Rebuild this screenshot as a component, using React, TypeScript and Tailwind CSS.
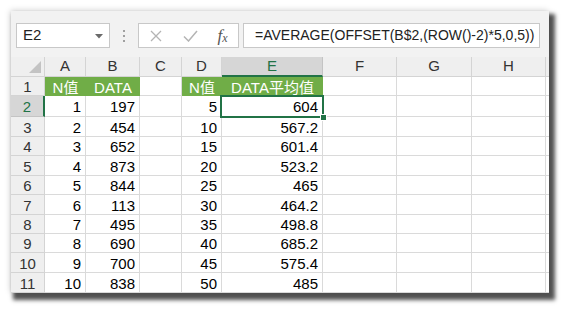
import React from "react";

const COLS = ["A", "B", "C", "D", "E", "F", "G", "H"];
const COL_W = ["w-[41px]", "w-[54px]", "w-[42px]", "w-[40px]", "w-[101px]", "w-[74px]", "w-[75px]", "w-[74px]"];
const ROW_H = ["h-[19px]", "h-[21px]", "h-[20px]", "h-[19px]", "h-[20px]", "h-[19px]", "h-[20px]", "h-[19px]", "h-[19px]", "h-[20px]", "h-[20px]"];

const B = [197, 454, 652, 873, 844, 113, 495, 690, 700, 838];
const E = ["604", "567.2", "601.4", "523.2", "465", "464.2", "498.8", "685.2", "575.4", "485"];

const font = { fontFamily: '"Liberation Sans", "Noto Sans CJK SC", Arial, sans-serif' };

function cellContent(r: number, c: number): { text: string; header?: boolean } {
  if (r === 0) {
    if (c === 0) return { text: "N值", header: true };
    if (c === 1) return { text: "DATA", header: true };
    if (c === 3) return { text: "N值", header: true };
    if (c === 4) return { text: "DATA平均值", header: true };
    return { text: "" };
  }
  const i = r - 1;
  if (c === 0) return { text: String(i + 1) };
  if (c === 1) return { text: String(B[i]) };
  if (c === 3) return { text: String((i + 1) * 5) };
  if (c === 4) return { text: E[i] };
  return { text: "" };
}

export default function App() {
  return (
    <div className="w-[567px] h-[312px] bg-white pl-[11px] pt-[11px] overflow-hidden" style={font}>
      <div className="w-[538px] h-[282px] bg-white overflow-hidden shadow-[4px_5px_4px_2px_rgba(0,0,0,0.68),-1px_-1px_6px_rgba(0,0,0,0.15)] flex flex-col">
        {/* formula bar */}
        <div className="h-[46px] bg-[#f2f2f2] flex items-start pt-[12px] pl-[5px] shrink-0">
          <div className="w-[94px] h-[25px] bg-white border border-[#c8c8c8] flex items-center pl-[6px] text-[15px] text-[#222] relative">
            E2
            <svg className="absolute right-[6px] top-[10px]" width="8" height="5" viewBox="0 0 8 5">
              <path d="M0 0 L8 0 L4 4.5 Z" fill="#6a6a6a" />
            </svg>
          </div>
          <div className="w-[28px] h-[25px] flex flex-col items-center justify-center gap-[3px]">
            <div className="w-[2px] h-[2px] bg-[#a0a0a0]" />
            <div className="w-[2px] h-[2px] bg-[#a0a0a0]" />
            <div className="w-[2px] h-[2px] bg-[#a0a0a0]" />
          </div>
          <div className="w-[101px] h-[25px] bg-white border border-[#c8c8c8] flex items-center">
            <div className="w-[34px] flex justify-center">
              <svg width="12" height="12" viewBox="0 0 12 12">
                <path d="M1 1 L11 11 M11 1 L1 11" stroke="#b4b4b4" strokeWidth="1.3" />
              </svg>
            </div>
            <div className="w-[34px] flex justify-center">
              <svg width="15" height="12" viewBox="0 0 15 12">
                <path d="M1 6.5 L5.5 11 L14 1" stroke="#b4b4b4" strokeWidth="1.5" fill="none" />
              </svg>
            </div>
            <div className="w-[31px] flex justify-center items-center text-[#555] italic" style={{ fontFamily: '"Liberation Serif", serif' }}>
              <span className="text-[17px] leading-none">f</span>
              <span className="text-[12px] leading-none mt-[4px]">x</span>
            </div>
          </div>
          <div className="ml-[4px] w-[297px] h-[25px] bg-white border border-[#c8c8c8] flex items-center pl-[11px] text-[14px] text-[#222] whitespace-nowrap">
            =AVERAGE(OFFSET(B$2,(ROW()-2)*5,0,5))
          </div>
        </div>
        {/* column headers */}
        <div className="flex h-[20px] shrink-0">
          <div className="w-[34px] h-full bg-[#efefef] border-r border-b border-[#d4d4d4] relative">
            <svg className="absolute right-[3px] bottom-[3px]" width="12" height="12" viewBox="0 0 12 12">
              <path d="M12 0 L12 12 L0 12 Z" fill="#c3c3c3" />
            </svg>
          </div>
          {COLS.map((c, i) =>
            c === "E" ? (
              <div key={c} className={`${COL_W[i]} h-full bg-[#d6d6d6] border-r border-[#c4c4c4] border-b-2 border-b-[#217346] flex items-center justify-center text-[15px] text-[#217346]`}>
                {c}
              </div>
            ) : (
              <div key={c} className={`${COL_W[i]} h-full bg-[#efefef] border-r border-b border-[#d4d4d4] flex items-center justify-center text-[15px] text-[#333]`}>
                {c}
              </div>
            )
          )}
          <div className="flex-1 h-full bg-[#efefef] border-b border-[#d4d4d4]" />
        </div>
        {/* rows */}
        {ROW_H.map((h, r) => (
          <div key={r} className={`flex ${h} shrink-0`}>
            {r === 1 ? (
              <div className="w-[34px] h-full bg-[#d6d6d6] border-r-2 border-r-[#217346] border-b border-b-[#c4c4c4] flex items-center justify-center text-[15px] text-[#217346] leading-none pt-[1px]">
                {r + 1}
              </div>
            ) : (
              <div className="w-[34px] h-full bg-[#efefef] border-r border-b border-[#d4d4d4] flex items-center justify-center text-[15px] text-[#333] leading-none pt-[1px]">
                {r + 1}
              </div>
            )}
            {COLS.map((_, c) => {
              const cc = cellContent(r, c);
              if (cc.header) {
                return (
                  <div key={c} className={`${COL_W[c]} h-full bg-[#70ad47] flex items-center justify-center text-[15px] text-white leading-none pt-[1px] whitespace-nowrap`}>
                    {cc.text}
                  </div>
                );
              }
              const sel = r === 1 && c === 4;
              return (
                <div key={c} className={`${COL_W[c]} h-full border-r border-b border-[#dadada] flex items-center justify-end pr-[4px] text-[15px] text-black leading-none pt-[1px] whitespace-nowrap ${sel ? "relative" : ""}`}>
                  {cc.text}
                  {sel && (
                    <>
                      <div className="absolute left-[-2px] top-[-1px] right-[-2px] bottom-[-2px] border-2 border-[#217346]" />
                      <div className="absolute right-[-5px] bottom-[-5px] w-[7px] h-[7px] bg-[#217346] border border-white z-10" />
                    </>
                  )}
                </div>
              );
            })}
            <div className="flex-1 h-full border-b border-[#dadada]" />
          </div>
        ))}
      </div>
    </div>
  );
}
